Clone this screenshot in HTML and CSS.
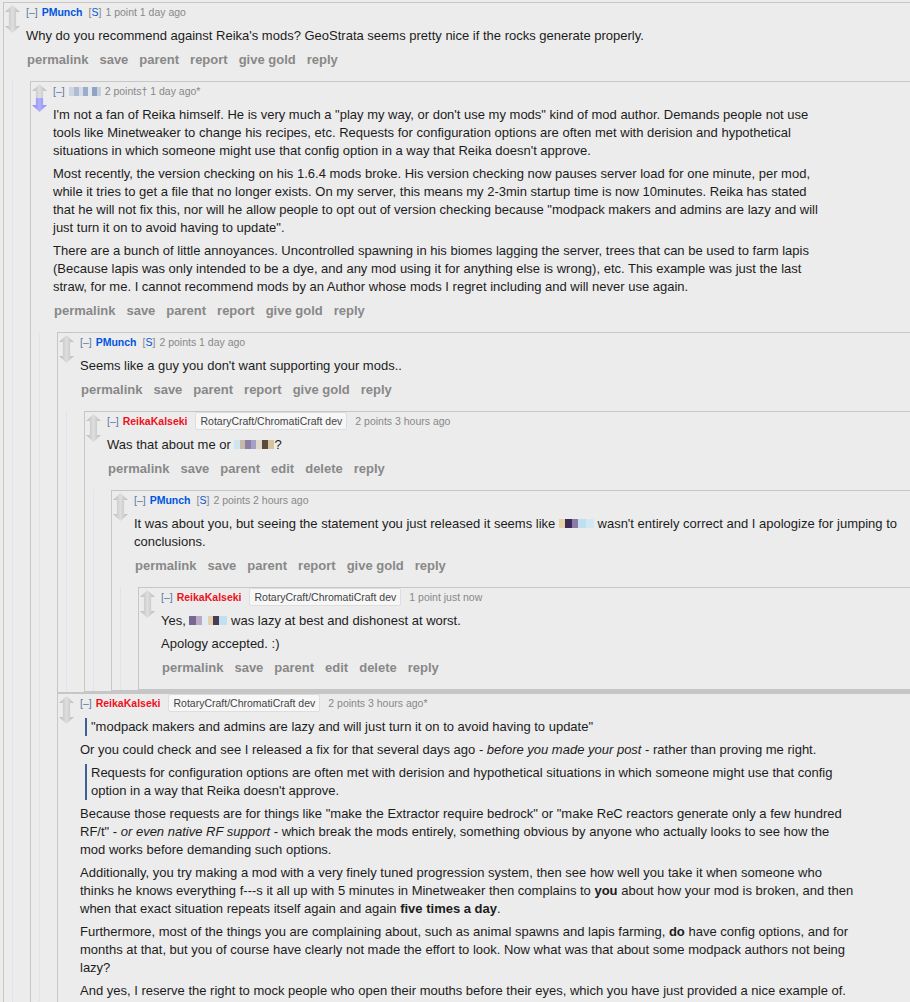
FILE: index.html
```html
<!DOCTYPE html>
<html lang="en">
<head>
    <meta charset="UTF-8">
    <title>comments</title>
    <link rel="stylesheet" href="styles.css">
</head>
<body>
    <div class="comment">
        <div class="main">
            <div class="midcol"><div class="arrow up"></div><div class="arrow down"></div></div>
            <div class="entry">
                <p class="tagline"><a class="expand">[–]</a><a class="author submitter">PMunch</a><span class="userattrs">[<a class="submitter">S</a>]</span><span>1 point 1 day ago</span></p>
                <div class="md">
                    <p>Why do you recommend against Reika's mods? GeoStrata seems pretty nice if the rocks generate properly.</p>
                </div>
                <ul class="buttons"><li>permalink</li><li>save</li><li>parent</li><li>report</li><li>give gold</li><li>reply</li></ul>
            </div>
        </div>
        <div class="child">
            <div class="comment">
                <div class="main">
                    <div class="midcol"><div class="arrow up"></div><div class="arrow down voted"></div></div>
                    <div class="entry">
                        <p class="tagline"><a class="expand">[–]</a><span class="blur blur-a"></span><span class="score">2 points† 1 day ago*</span></p>
                        <div class="md">
                            <p>I'm not a fan of Reika himself. He is very much a "play my way, or don't use my mods" kind of mod author. Demands people not use tools like Minetweaker to change his recipes, etc. Requests for configuration options are often met with derision and hypothetical situations in which someone might use that config option in a way that Reika doesn't approve.</p>
                            <p>Most recently, the version checking on his 1.6.4 mods broke. His version checking now pauses server load for one minute, per mod, while it tries to get a file that no longer exists. On my server, this means my 2-3min startup time is now 10minutes. Reika has stated that he will not fix this, nor will he allow people to opt out of version checking because "modpack makers and admins are lazy and will just turn it on to avoid having to update".</p>
                            <p>There are a bunch of little annoyances. Uncontrolled spawning in his biomes lagging the server, trees that can be used to farm lapis (Because lapis was only intended to be a dye, and any mod using it for anything else is wrong), etc. This example was just the last straw, for me. I cannot recommend mods by an Author whose mods I regret including and will never use again.</p>
                        </div>
                        <ul class="buttons"><li>permalink</li><li>save</li><li>parent</li><li>report</li><li>give gold</li><li>reply</li></ul>
                    </div>
                </div>
                <div class="child">
                    <div class="comment">
                        <div class="main">
                            <div class="midcol"><div class="arrow up"></div><div class="arrow down"></div></div>
                            <div class="entry">
                                <p class="tagline"><a class="expand">[–]</a><a class="author submitter">PMunch</a><span class="userattrs">[<a class="submitter">S</a>]</span><span>2 points 1 day ago</span></p>
                                <div class="md">
                                    <p>Seems like a guy you don't want supporting your mods..</p>
                                </div>
                                <ul class="buttons"><li>permalink</li><li>save</li><li>parent</li><li>report</li><li>give gold</li><li>reply</li></ul>
                            </div>
                        </div>
                        <div class="child">
                            <div class="comment">
                                <div class="main">
                                    <div class="midcol"><div class="arrow up"></div><div class="arrow down"></div></div>
                                    <div class="entry">
                                        <p class="tagline"><a class="expand">[–]</a><a class="author dev">ReikaKalseki</a><span class="flair">RotaryCraft/ChromatiCraft dev</span><span>2 points 3 hours ago</span></p>
                                        <div class="md">
                                            <p>Was that about me or <span class="blur blur-b"></span>?</p>
                                        </div>
                                        <ul class="buttons"><li>permalink</li><li>save</li><li>parent</li><li>edit</li><li>delete</li><li>reply</li></ul>
                                    </div>
                                </div>
                                <div class="child">
                                    <div class="comment">
                                        <div class="main">
                                            <div class="midcol"><div class="arrow up"></div><div class="arrow down"></div></div>
                                            <div class="entry">
                                                <p class="tagline"><a class="expand">[–]</a><a class="author submitter">PMunch</a><span class="userattrs">[<a class="submitter">S</a>]</span><span>2 points 2 hours ago</span></p>
                                                <div class="md">
                                                    <p>It was about you, but seeing the statement you just released it seems like <span class="blur blur-c"></span> wasn't entirely correct and I apologize for jumping to conclusions.</p>
                                                </div>
                                                <ul class="buttons"><li>permalink</li><li>save</li><li>parent</li><li>report</li><li>give gold</li><li>reply</li></ul>
                                            </div>
                                        </div>
                                        <div class="child">
                                            <div class="comment">
                                                <div class="main">
                                                    <div class="midcol"><div class="arrow up"></div><div class="arrow down"></div></div>
                                                    <div class="entry">
                                                        <p class="tagline"><a class="expand">[–]</a><a class="author dev">ReikaKalseki</a><span class="flair">RotaryCraft/ChromatiCraft dev</span><span>1 point just now</span></p>
                                                        <div class="md">
                                                            <p>Yes, <span class="blur blur-d"></span> was lazy at best and dishonest at worst.</p>
                                                            <p>Apology accepted. :)</p>
                                                        </div>
                                                        <ul class="buttons"><li>permalink</li><li>save</li><li>parent</li><li>edit</li><li>delete</li><li>reply</li></ul>
                                                    </div>
                                                </div>
                                            </div>
                                        </div>
                                    </div>
                                </div>
                            </div>
                        </div>
                    </div>
                    <div class="comment">
                        <div class="main">
                            <div class="midcol"><div class="arrow up"></div><div class="arrow down"></div></div>
                            <div class="entry">
                                <p class="tagline"><a class="expand">[–]</a><a class="author dev">ReikaKalseki</a><span class="flair">RotaryCraft/ChromatiCraft dev</span><span>2 points 3 hours ago*</span></p>
                                <div class="md">
                                    <blockquote><p>"modpack makers and admins are lazy and will just turn it on to avoid having to update"</p></blockquote>
                                    <p>Or you could check and see I released a fix for that several days ago - <em>before you made your post</em> - rather than proving me right.</p>
                                    <blockquote><p>Requests for configuration options are often met with derision and hypothetical situations in which someone might use that config option in a way that Reika doesn't approve.</p></blockquote>
                                    <p>Because those requests are for things like "make the Extractor require bedrock" or "make ReC reactors generate only a few hundred RF/t" - <em>or even native RF support</em> - which break the mods entirely, something obvious by anyone who actually looks to see how the mod works before demanding such options.</p>
                                    <p>Additionally, you try making a mod with a very finely tuned progression system, then see how well you take it when someone who thinks he knows everything f---s it all up with 5 minutes in Minetweaker then complains to <strong>you</strong> about how your mod is broken, and then when that exact situation repeats itself again and again <strong>five times a day</strong>.</p>
                                    <p>Furthermore, most of the things you are complaining about, such as animal spawns and lapis farming, <strong>do</strong> have config options, and for months at that, but you of course have clearly not made the effort to look. Now what was that about some modpack authors not being lazy?</p>
                                    <p>And yes, I reserve the right to mock people who open their mouths before their eyes, which you have just provided a nice example of.</p>
                                </div>
                                <ul class="buttons"><li>permalink</li><li>save</li><li>parent</li><li>edit</li><li>delete</li><li>reply</li></ul>
                            </div>
                        </div>
                    </div>
                </div>
            </div>
        </div>
    </div>
</body>
</html>
```

FILE: styles.css
```css
html{background: #ececec;}
body{margin: 2px 0 0 3px;background: #ececec;font-family: "Liberation Sans", Arial, sans-serif;color: #1c1c1c;}
a{text-decoration: none;cursor: pointer;}
ul,li{list-style: none;margin: 0;padding: 0;}

.comment{border: 1px solid #c6c6c6;border-right: 0;padding-left: 1px;}
.child{margin-left: 7px;border-left: 1px dotted #d8d8ee;}
.child > .comment{margin-left: 17px;}
.main{display: flex;}
.midcol{flex: none;width: 15px;padding-top: 2px;margin-right: 6px;}
.entry{flex: 1;min-width: 0;}

.arrow{width: 15px;height: 14px;background: linear-gradient(90deg, #b9b9b9, #dedede 50%, #b9b9b9);}
.arrow.up{clip-path: polygon(50% 0, 100% 50%, 74% 50%, 74% 100%, 26% 100%, 26% 50%, 0 50%);}
.arrow.down{clip-path: polygon(26% 0, 74% 0, 74% 50%, 100% 50%, 50% 100%, 0 50%, 26% 50%);}
.arrow.voted{background: linear-gradient(90deg, #8585f5, #b0b0ff 50%, #8585f5);}

.tagline{display: flex;align-items: center;gap: 4px;height: 18px;margin: 0;font-size: 10.5px;color: #888;white-space: nowrap;}
.expand{color: #5b7aa3;}
.author{font-weight: bold;}
.submitter{color: #0055df;}
.author.submitter{margin-right: 2px;}
.dev{color: #ee1122;margin-right: 4px;}
.flair{height: 16px;line-height: 16px;padding: 0 4px;margin-right: 4px;background: #f7f7f7;border: 1px solid #dedede;border-radius: 2px;color: #444;}

.md{max-width: 776px;padding-top: 1px;font-size: 13px;line-height: 18px;}
.md p{margin: 5px 0;}
.md blockquote{margin: 5px 0 5px 5px;padding: 0 0 0 4px;border-left: 2px solid #3e6196;}
.md blockquote p{margin: 0;}

.buttons{display: flex;gap: 11px;padding: 2px 0 13px 1px;font-size: 13px;font-weight: bold;line-height: 16px;color: #888;}

.blur{display: inline-block;height: 9px;vertical-align: baseline;}
.blur-a{width: 32px;background: linear-gradient(90deg, #cdd5e2 0 15%, #aebbd0 15% 30%, #d6dde8 30% 45%, #9aaecb 45% 60%, #e3e7ee 60% 72%, #8fa3c2 72% 88%, #c5cfdf 88%);}
.blur-b{width: 40px;background: linear-gradient(90deg, #cfe6ee 0 14%, #c8b8a8 14% 28%, #8c7fa6 28% 42%, #a6a1c4 42% 56%, #e1d9cc 56% 70%, #5a4a40 70% 84%, #d8c49a 84%);}
.blur-c{width: 35px;background: linear-gradient(90deg, #e6d2a8 0 18%, #3c2b5a 18% 36%, #8a7aa6 36% 54%, #bfe0ef 54% 76%, #d2e8f2 76%);}
.blur-d{width: 38px;background: linear-gradient(90deg, #76688e 0 18%, #b9a9c7 18% 34%, #e2edf2 34% 50%, #e4d2ae 50% 64%, #4a3a55 64% 80%, #bfe2ee 80%);}
```
